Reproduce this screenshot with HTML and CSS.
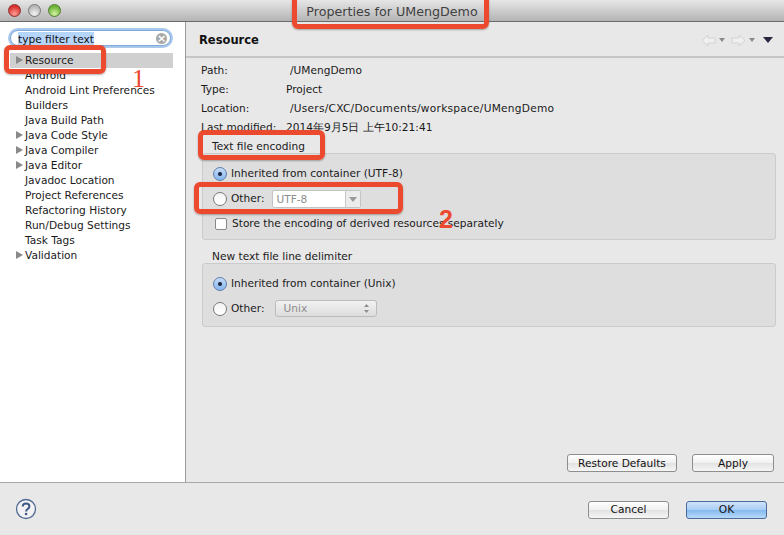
FILE: index.html
```html
<!DOCTYPE html>
<html>
<head>
<meta charset="utf-8">
<title>Properties for UMengDemo</title>
<link rel="stylesheet" href="styles.css">
</head>
<body>
<div class="window">
  <header class="titlebar">
    <div class="lights">
      <span class="light red"></span>
      <span class="light grey"></span>
      <span class="light green"></span>
    </div>
    <div class="title">Properties for UMengDemo</div>
  </header>
  <div class="main">
    <aside class="sidebar">
      <div class="search"><span class="search-text">type filter text</span><span class="search-clear">×</span></div>
      <ul class="tree">
        <li class="selected"><span class="arrow"></span>Resource</li>
        <li>Android</li>
        <li>Android Lint Preferences</li>
        <li>Builders</li>
        <li>Java Build Path</li>
        <li><span class="arrow"></span>Java Code Style</li>
        <li><span class="arrow"></span>Java Compiler</li>
        <li><span class="arrow"></span>Java Editor</li>
        <li>Javadoc Location</li>
        <li>Project References</li>
        <li>Refactoring History</li>
        <li>Run/Debug Settings</li>
        <li>Task Tags</li>
        <li><span class="arrow"></span>Validation</li>
      </ul>
    </aside>
    <section class="panel">
      <div class="panel-head">
        <h2>Resource</h2>
        <div class="nav">
          <svg class="nav-arrow" width="15" height="13" viewBox="0 0 15 13"><path d="M1 6.5 7 1v3h7v5H7v3z" fill="#f0f0f0" stroke="#d2d2d2"/></svg>
          <span class="drop small"></span>
          <svg class="nav-arrow next" width="15" height="13" viewBox="0 0 15 13"><path d="M14 6.5 8 1v3H1v5h7v3z" fill="#f0f0f0" stroke="#d2d2d2"/></svg>
          <span class="drop small"></span>
          <span class="drop big"></span>
        </div>
      </div>
      <div class="panel-body">
        <dl class="info">
          <div class="row"><dt>Path:</dt><dd class="ind">/UMengDemo</dd></div>
          <div class="row"><dt>Type:</dt><dd>Project</dd></div>
          <div class="row"><dt>Location:</dt><dd class="ind loc">/Users/CXC/Documents/workspace/UMengDemo</dd></div>
          <div class="row"><dt>Last modified:</dt><dd>2014年9月5日 上午10:21:41</dd></div>
        </dl>
        <div class="group-label first">Text file encoding</div>
        <div class="group enc">
          <div class="opt"><span class="radio on"></span>Inherited from container (UTF-8)</div>
          <div class="opt"><span class="radio"></span>Other:<span class="combo"><span class="combo-text">UTF-8</span><span class="combo-btn"></span></span></div>
          <div class="opt"><span class="check"></span>Store the encoding of derived resources separately</div>
        </div>
        <div class="group-label second">New text file line delimiter</div>
        <div class="group delim">
          <div class="opt"><span class="radio on"></span>Inherited from container (Unix)</div>
          <div class="opt"><span class="radio"></span>Other:<span class="select"><span>Unix</span><svg class="updown" width="5" height="9" viewBox="0 0 5 9"><path d="M2.500 0 5 3H0zM2.500 9 0 6h5z" fill="#8e8e8e"/></svg></span></div>
        </div>
        <div class="actions">
          <button class="btn restore">Restore Defaults</button>
          <button class="btn apply">Apply</button>
        </div>
      </div>
    </section>
  </div>
  <footer class="footer">
    <svg class="help" width="22" height="22" viewBox="0 0 22 22"><circle cx="11" cy="11" r="9.500" fill="#f2f2f4" stroke="#4f6a93" stroke-width="1.300"/><path d="M7.800 8.400c0-4 6.600-4 6.600 0 0 2.600-3.300 2.600-3.300 5" fill="none" stroke="#3d5784" stroke-width="2"/><circle cx="11.100" cy="16" r="1.300" fill="#3d5784"/></svg>
    <div class="footer-btns">
      <button class="btn">Cancel</button>
      <button class="btn primary">OK</button>
    </div>
  </footer>
  <div class="mark m-title"></div>
  <div class="mark m-resource"></div>
  <div class="mark m-encoding"></div>
  <div class="mark m-other"></div>
  <div class="num n1">1</div>
  <div class="num n2">2</div>
</div>
</body>
</html>
```
FILE: styles.css
```css
* { box-sizing: border-box; }
html, body { margin: 0; padding: 0; }
body { width: 784px; height: 535px; overflow: hidden; background: #e8e8e8; }
.window {
  position: relative;
  width: 784px;
  height: 535px;
  display: flex;
  flex-direction: column;
  font: 10.600px/15px "DejaVu Sans", sans-serif;
  color: #1a1a1a;
  overflow: hidden;
}
.titlebar {
  height: 22px;
  flex: none;
  position: relative;
  display: flex;
  align-items: center;
  justify-content: center;
  background: linear-gradient(#e6e6e6, #b4b4b4);
  border-bottom: 1px solid #6a6a6a;
}
.lights { position: absolute; left: 8px; top: 4px; display: flex; gap: 7px; }
.light { width: 13px; height: 13px; border-radius: 50%; border: 1px solid #777; }
.light.red { background: radial-gradient(circle at 50% 80%, #ff9d94, #d8322e 70%); border-color: #8a3030; }
.light.grey { background: radial-gradient(circle at 50% 80%, #f4f4f4, #b8b8b8 70%); }
.light.green { background: radial-gradient(circle at 50% 80%, #d4f2a0, #6cb33a 70%); border-color: #4f7d2e; }
.title { font-size: 12.700px; color: #404040; margin-top: 1px; }
.main { flex: 1; display: flex; min-height: 0; border-bottom: 1px solid #a8a8a8; }
.sidebar { width: 186px; flex: none; background: #fff; border-right: 1px solid #9c9c9c; padding: 8px 12px 0 5px; }
.search {
  height: 16px;
  margin: 0 0 7px 5px;
  width: 161px;
  display: flex;
  align-items: center;
  justify-content: space-between;
  padding: 1px 3px 0 7px;
  border-radius: 8px;
  border: 1px solid #7fa9d8;
  box-shadow: 0 0 0 2px #a9c8ec;
  background: #fff;
}
.search-text { background: #b5d5fb; color: #111; line-height: 14px; }
.search-clear {
  width: 11px; height: 11px; border-radius: 50%; background: #a8a8a8; color: #fff;
  font: bold 11px/11px "DejaVu Sans", sans-serif; text-align: center;
}
.tree { list-style: none; margin: 0; padding: 0; }
.tree li { height: 15px; line-height: 15px; padding-left: 20px; position: relative; white-space: nowrap; }
.tree li.selected { background: #d0d0d0; margin-left: 5px; padding-left: 15px; }
.arrow {
  position: absolute; left: 11px; top: 3px; width: 0; height: 0;
  border-left: 7px solid #8a8a8a; border-top: 4.500px solid transparent; border-bottom: 4.500px solid transparent;
}
.tree li.selected .arrow { left: 6px; }
.panel { flex: 1; display: flex; flex-direction: column; min-width: 0; }
.panel-head {
  height: 36px; flex: none; display: flex; align-items: center; justify-content: space-between;
  padding: 2px 11px 0 13px; border-bottom: 2px solid #c6c6c6; background: #e8e8e8;
}
.panel-head h2 { margin: 0; font-size: 11.500px; font-weight: bold; color: #111; }
.nav { display: flex; align-items: center; }
.nav-arrow.next { margin-left: 6px; }
.drop { width: 0; height: 0; border-left: 3px solid transparent; border-right: 3px solid transparent; border-top: 4px solid #8a8a8a; margin-left: 3px; }
.drop.big { border-left-width: 5px; border-right-width: 5px; border-top: 6px solid #2c2440; margin-left: 8px; }
.panel-body { flex: 1; display: flex; flex-direction: column; padding: 3px 8px 10px 15px; min-height: 0; }
.info { margin: 0; }
.row { display: flex; height: 19px; align-items: center; }
.row dt { width: 85px; flex: none; }
.row dd { margin: 0; white-space: nowrap; }
.row dd.ind { margin-left: 4px; }
.row dd.loc { letter-spacing: .25px; }
.group-label { height: 14px; line-height: 14px; padding-left: 11px; }
.group-label.first { margin-top: 2px; }
.group-label.second { margin-top: 9px; }
.group { margin-left: 1px; background: #dedede; border: 1px solid #cbcbcb; border-radius: 3px; padding: 7px 0 0 10px; }
.group.enc { height: 87px; }
.group.delim { height: 64px; }
.opt { display: flex; align-items: center; height: 25px; white-space: nowrap; }
.radio {
  width: 14px; height: 14px; border-radius: 50%; margin-right: 4px; flex: none;
  border: 1px solid #7a7a7a; background: linear-gradient(#f4f4f4, #fff);
}
.radio.on {
  border-color: #5f7fa8;
  background: radial-gradient(circle, #1d2a44 0, #1d2a44 1.500px, transparent 2.500px), linear-gradient(#c6dbf6, #86b6ee);
}
.check { width: 12px; height: 12px; margin: 0 5px 0 2px; border: 1px solid #8a8a8a; border-radius: 2px; background: #fff; flex: none; }
.combo {
  margin-left: 8px; width: 89px; height: 18px; display: flex; justify-content: space-between; align-items: stretch;
  background: #fff; border: 1px solid #c4c4c4; border-radius: 2px; color: #8c8c8c;
}
.combo-text { padding-left: 3px; line-height: 16px; }
.combo-btn { width: 15px; border-left: 1px solid #c8c8c8; background: #ececec; position: relative; }
.combo-btn::after {
  content: ""; position: absolute; left: 3px; top: 6px; width: 0; height: 0;
  border-left: 4px solid transparent; border-right: 4px solid transparent; border-top: 5px solid #9a9a9a;
}
.select {
  margin-left: 11px; width: 102px; height: 17px; display: flex; align-items: center; justify-content: space-between;
  padding: 0 7px; border: 1px solid #bcbcbc; border-radius: 3px; background: linear-gradient(#f2f2f2, #dcdcdc); color: #8c8c8c;
}
.actions { margin-top: auto; display: flex; justify-content: flex-end; gap: 15px; padding-right: 2px; }
.btn {
  height: 18px; padding: 0; font: 10.600px/15px "DejaVu Sans", sans-serif; color: #111;
  border: 1px solid #8e8e8e; border-radius: 3px; background: linear-gradient(#fff, #f0f0f0 50%, #e2e2e2 51%, #f6f6f6);
  width: 81px;
}
.btn.restore { width: 110px; }
.btn.apply { width: 82px; }
.btn.primary { border-color: #4a6a9c; background: linear-gradient(#cfe2fa, #a8cdf5 50%, #84b8f0 51%, #b8daf9); }
.footer { height: 52px; flex: none; display: flex; align-items: center; justify-content: space-between; padding: 0 17px 0 15px; }
.footer-btns { display: flex; gap: 17px; margin-top: 1px; }
.mark { position: absolute; border: 5px solid #ec4a2f; border-radius: 6px; box-shadow: 0 1px 2px rgba(0,0,0,.3); }
.m-title { left: 292px; top: -8px; width: 197px; height: 37px; }
.m-resource { left: 4px; top: 45px; width: 102px; height: 29px; }
.m-encoding { left: 198px; top: 130px; width: 127px; height: 30px; }
.m-other { left: 194px; top: 182px; width: 209px; height: 32px; }
.num { position: absolute; color: #ec4a2f; line-height: 1; }
.n1 { left: 132px; top: 66px; font-size: 26px; font-family: "Liberation Serif", serif; }
.n2 { left: 439px; top: 207px; font-size: 25px; font-weight: bold; font-family: "Liberation Sans", sans-serif; }
```
